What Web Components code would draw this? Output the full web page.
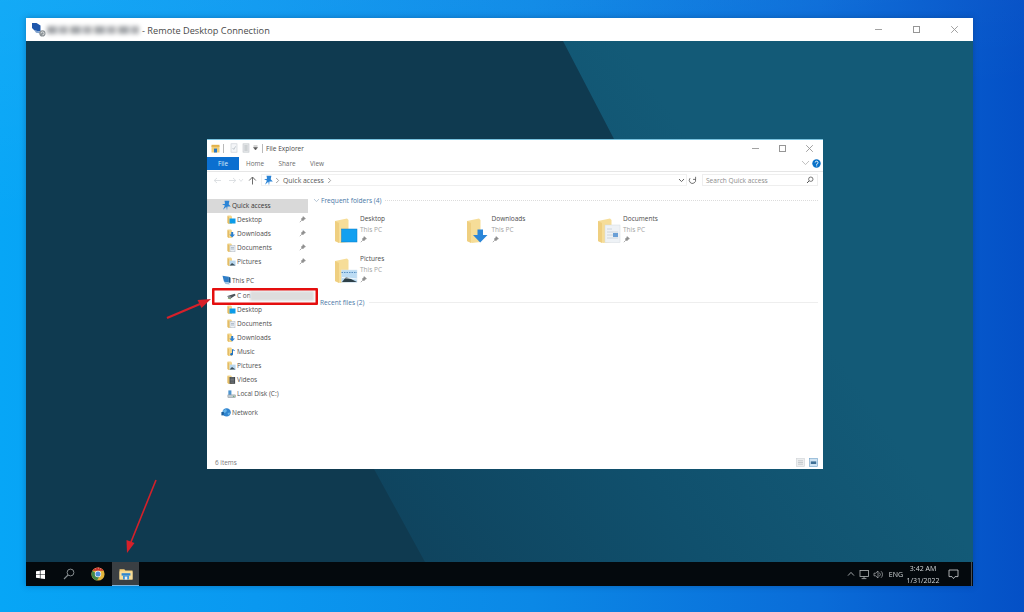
<!DOCTYPE html>
<html lang="en">
<head>
<meta charset="utf-8">
<title>Remote Desktop Connection</title>
<style>
  html, body { margin: 0; height: 100%; }
  body { font-family: "Open Sans", "Liberation Sans", sans-serif; overflow: hidden; }
</style>
</head>
<body>
<desktop-screen>
  <rdp-window>
    <explorer-window slot="window">
      <nav-item slot="nav" icon="star" level="0" selected>Quick access</nav-item>
      <nav-item slot="nav" icon="navDesktop" level="1" pinned>Desktop</nav-item>
      <nav-item slot="nav" icon="navDownloads" level="1" pinned>Downloads</nav-item>
      <nav-item slot="nav" icon="navDocuments" level="1" pinned>Documents</nav-item>
      <nav-item slot="nav" icon="navPictures" level="1" pinned>Pictures</nav-item>
      <nav-item slot="nav" icon="pc" level="0" group tall>This PC</nav-item>
      <nav-item slot="nav" icon="drive" level="1" marked>C on<span class="smudge"></span></nav-item>
      <nav-item slot="nav" icon="navDesktop" level="1">Desktop</nav-item>
      <nav-item slot="nav" icon="navDocuments" level="1">Documents</nav-item>
      <nav-item slot="nav" icon="navDownloads" level="1">Downloads</nav-item>
      <nav-item slot="nav" icon="navMusic" level="1">Music</nav-item>
      <nav-item slot="nav" icon="navPictures" level="1">Pictures</nav-item>
      <nav-item slot="nav" icon="navVideos" level="1">Videos</nav-item>
      <nav-item slot="nav" icon="disk" level="1">Local Disk (C:)</nav-item>
      <nav-item slot="nav" icon="network" level="0" group>Network</nav-item>

      <folder-tile slot="tiles" icon="bigDesktop">Desktop</folder-tile>
      <folder-tile slot="tiles" icon="bigDownloads">Downloads</folder-tile>
      <folder-tile slot="tiles" icon="bigDocuments">Documents</folder-tile>
      <folder-tile slot="tiles" icon="bigPictures">Pictures</folder-tile>
    </explorer-window>
    <task-bar slot="taskbar"></task-bar>
  </rdp-window>
  <red-arrows></red-arrows>
</desktop-screen>

<script>
"use strict";

const folderBack = `<path d="M1 3 L13 .5 L14.5 2 V24 L6 25 L1 23Z" fill="#f6dd98"/><path d="M1 3 L5 5 V25 L1 23Z" fill="#efcf80"/>`;
const navFolder = `<path d="M.5 .5 H4 L5 1.5 V9 H2 L.5 8Z" fill="#f4d68a"/><path d="M.5 1 L2 2 V9 L.5 8Z" fill="#e4bc66"/>`;

const ICONS = {
  star: [11, 11, `<path d="M3.5 .8 L8.4 .8 L7.7 4.2 L9.8 6.4 L6.5 6.5 L6 10.6 L5.3 6.8 L2 9.8 L3.9 5.6 L1 4.3 L4.1 3.7Z" fill="#2b84d6"/>`],
  pin: [7, 7, `<path d="M4.2 .6 L6.4 2.8 L5.3 3.1 L4 4.8 L2.2 3 L3.9 1.7Z M2.9 4.1 L.8 6.2" fill="#8d8d8d" stroke="#8d8d8d" stroke-width=".7"/>`],
  navDesktop: [9, 9, `${navFolder}<rect x="2.5" y="3.5" width="6" height="5" fill="#0c9be8"/>`],
  navDownloads: [9, 9, `${navFolder}<path d="M4.2 3 H6.2 V5.4 H8 L5.2 8.6 L2.4 5.4 H4.2Z" fill="#2a7fd0"/>`],
  navDocuments: [9, 9, `${navFolder}<rect x="3" y="2.5" width="5" height="6.3" fill="#edf1f5" stroke="#a9b4c0" stroke-width=".5"/><path d="M4 4.4 H7 M4 6 H7" stroke="#7c93ad" stroke-width=".6"/>`],
  navPictures: [9, 9, `${navFolder}<rect x="2.6" y="3.6" width="6" height="5" fill="#b9d7ee"/><path d="M2.6 8.6 L5 6 L8.6 8.6Z" fill="#3a4f5c"/>`],
  navMusic: [9, 9, `${navFolder}<path d="M5.5 2.5 V7 M5.5 2.5 L7.6 3.6" stroke="#1d6fc0" stroke-width="1" fill="none"/><circle cx="4.6" cy="7.2" r="1.3" fill="#1d6fc0"/>`],
  navVideos: [9, 9, `${navFolder}<rect x="2.5" y="2" width="5.6" height="6.8" fill="#3f4448"/><path d="M3.4 3 H7.2 M3.4 4.4 H7.2 M3.4 5.8 H7.2 M3.4 7.2 H7.2" stroke="#aab0b4" stroke-width=".5"/>`],
  pc: [11, 11, `<path d="M1.5 .8 L7.8 1.8 V7.6 L3 6.8Z" fill="#2f7fc8"/><path d="M3 6.8 L7.8 7.6 L8.8 9.6 L4.5 9Z" fill="#9dc2e0"/><path d="M7.8 1.8 L9.5 2.8 V8 L7.8 7.6Z" fill="#17578f"/>`],
  drive: [10, 8, `<path d="M.5 4 L8.6 1.6 L9.6 3.2 L4 6.8 L1.8 6.4Z" fill="#4a5257"/><path d="M.5 4 L5 4.6 L4 6.8 L1.8 6.4Z" fill="#8a9196"/><path d="M1 6.6 L4.5 7.2" stroke="#6fa04a" stroke-width=".7"/>`],
  disk: [10, 10, `<rect x="1.5" y="1" width="3.4" height="5" fill="#4d94cf"/><rect x="1" y="6" width="8.4" height="3" fill="#c4ccd2" stroke="#7c868d" stroke-width=".5"/><rect x="6.6" y="7.1" width="1.6" height=".8" fill="#45a045"/>`],
  network: [11, 11, `<circle cx="5.6" cy="5.4" r="4.2" fill="#2f84cf"/><path d="M2 3.5 L5 2 L6 4 L4 6 L2.5 5.5Z M6.5 6 L9.3 5.6 L7.8 8.8Z" fill="#69b4e8"/><rect x=".4" y="5" width="2.4" height="3.4" fill="#1c5f9c"/>`],
  bigDesktop: [24, 25, `${folderBack}<rect x="7.5" y="11" width="15.5" height="13" fill="#12a0f0" stroke="#0a7cc8" stroke-width=".5"/>`],
  bigDownloads: [24, 25, `${folderBack}<path d="M11.5 11.5 H17 V17 H21.5 L14.2 24.5 L7 17 H11.5Z" fill="#2b86d8"/>`],
  bigDocuments: [24, 25, `${folderBack}<rect x="8" y="7" width="15" height="17.5" fill="#eef2f6" stroke="#d4dae0" stroke-width=".5"/><path d="M10 11 H15 M10 14 H21 M10 17 H21 M10 20 H21" stroke="#c4ced8" stroke-width=".8"/><rect x="16" y="15" width="5" height="4" fill="#6a9fd6"/>`],
  bigPictures: [24, 25, `${folderBack}<rect x="7.5" y="12" width="15.5" height="12.5" fill="#bcdcf4" stroke="#d9e6f0" stroke-width=".5"/><path d="M7.5 14.5 H23" stroke="#5a8fc0" stroke-width="1.2" stroke-dasharray="1.5 1"/><path d="M8 24 L12 19 L17 21 L23 24Z" fill="#2e4048"/><path d="M8 19.5 L23 21" stroke="#ffffff" stroke-width=".8"/>`],
  rdp: [14, 15, `<path d="M0 1 L4.5 1 L8.5 3.5 V9.5 L2.5 8.5 L0 6Z" fill="#1f57ab"/><path d="M2.5 8.5 L8.5 9.5 L9 11.5 L4 10.8Z" fill="#7ea0cc"/><circle cx="10.4" cy="11.4" r="3.1" fill="#8b9296"/><path d="M9 11.4 A1.5 1.5 0 1 1 10.4 12.9" stroke="#fff" stroke-width=".7" fill="none"/>`],
  quick: [9, 9, `<rect x=".5" y="2" width="8" height="6.5" fill="#f2cf78"/><rect x=".5" y=".8" width="8" height="2" fill="#e2b24c"/><rect x="3" y="4.6" width="3" height="3.9" fill="#2a79c4"/>`],
  check: [8, 10, `<rect x="1" y=".8" width="6" height="8.4" fill="#f4f6f8" stroke="#c6ccd1" stroke-width=".6"/><path d="M2.6 5 L3.8 6.4 L5.6 3.4" stroke="#aab3ba" stroke-width=".7" fill="none"/>`],
  page: [8, 10, `<rect x="1" y=".8" width="6" height="8.4" fill="#e4e6e8" stroke="#c2c7cb" stroke-width=".6"/><path d="M2.4 3 H5.6 M2.4 5 H5.6 M2.4 7 H5.6" stroke="#a3a9ae" stroke-width=".7"/>`],
  caret: [7, 7, `<path d="M1.5 2.5 H5.5 L3.5 5Z M1.5 1 H5.5" fill="#555" stroke="#555" stroke-width=".5"/>`],
  min: [9, 9, `<path d="M1 4.5 H8" stroke="#a2a2a2"/>`],
  max: [9, 9, `<rect x="1.5" y="1.5" width="6" height="6" fill="none" stroke="#969696"/>`],
  close: [9, 9, `<path d="M1.2 1.2 L7.8 7.8 M7.8 1.2 L1.2 7.8" stroke="#969696" stroke-width=".9"/>`],
  chevDown: [9, 6, `<path d="M1 1 L4.5 4.6 L8 1" fill="none" stroke="#b0b0b0" stroke-width=".8"/>`],
  help: [9, 9, `<circle cx="4.5" cy="4.5" r="4.2" fill="#0a72c9"/><path d="M3.2 3.5 A1.4 1.4 0 1 1 4.7 5 V5.8 M4.7 6.4 V7.4" stroke="#fff" stroke-width=".9" fill="none"/>`],
  back: [9, 7, `<path d="M8 3.5 H1.5 M4 1 L1.2 3.5 L4 6" fill="none" stroke="#d4d8dc" stroke-width=".8"/>`],
  forward: [9, 7, `<path d="M1 3.5 H7.5 M5 1 L7.8 3.5 L5 6" fill="none" stroke="#d4d8dc" stroke-width=".8"/>`],
  up: [9, 9, `<path d="M4.5 8.5 V1.2 M1.2 4.5 L4.5 1 L7.8 4.5" fill="none" stroke="#5c5c5c" stroke-width=".9"/>`],
  crumb: [5, 7, `<path d="M1.2 1 L3.6 3.5 L1.2 6" fill="none" stroke="#777" stroke-width=".7"/>`],
  crumbDown: [7, 5, `<path d="M1 1 L3.5 3.6 L6 1" fill="none" stroke="#666" stroke-width="1"/>`],
  chevSmall: [6, 5, `<path d="M1 1 L3 3.4 L5 1" fill="none" stroke="#d4d8dc" stroke-width=".7"/>`],
  refresh: [9, 9, `<path d="M2 2.2 A3.2 3.2 0 1 0 7.4 3 M7.6 .8 V3.4 H5" fill="none" stroke="#555" stroke-width=".8"/>`],
  search: [8, 8, `<circle cx="4.8" cy="3.2" r="2.2" fill="none" stroke="#555" stroke-width=".8"/><path d="M3.2 4.8 L1 7" stroke="#555" stroke-width="1"/>`],
  sectionDown: [7, 5, `<path d="M1 1 L3.5 3.6 L6 1" fill="none" stroke="#9ab0c4" stroke-width=".7"/>`],
  viewDetails: [9, 9, `<rect x=".5" y=".5" width="8" height="8" fill="#eceeef" stroke="#ced2d5" stroke-width=".6"/><path d="M2 2.8 H7 M2 4.5 H7 M2 6.2 H7" stroke="#b8bdc1" stroke-width=".7"/>`],
  viewTiles: [9, 9, `<rect x=".5" y=".5" width="8" height="8" fill="#cfe3f2" stroke="#6fa0c8" stroke-width=".6"/><rect x="1.8" y="3.4" width="5.4" height="2.6" fill="#3e6f96"/>`],
  winLogo: [9, 9, `<path d="M0 1.3 L3.9 .7 V4.2 H0Z M4.5 .6 L9 0 V4.2 H4.5Z M0 4.8 H3.9 V8.3 L0 7.7Z M4.5 4.8 H9 V9 L4.5 8.4Z" fill="#fff"/>`],
  taskSearch: [12, 12, `<circle cx="7.5" cy="4.5" r="3.4" fill="none" stroke="#868c8f" stroke-width="1"/><path d="M5 7 L1 11" stroke="#868c8f" stroke-width="1.1"/>`],
  chrome: [14, 14, `<circle cx="7" cy="7" r="6.6" fill="#e2b53c"/><path d="M1.3 3.8 A6.6 6.6 0 0 1 12.7 3.8 H7 Z" fill="#c9332c"/><path d="M1.3 3.8 A6.6 6.6 0 0 0 6 13.5 L8.6 9Z" fill="#43884a"/><circle cx="7" cy="7" r="3.2" fill="#f2f4f6"/><circle cx="7" cy="7" r="2.5" fill="#4d8fdc"/><path d="M4.5 1.8 h.6 M7 1.2 h.6 M9.4 1.9 h.6" stroke="#fff" stroke-width=".7"/>`],
  taskFolder: [14, 12, `<path d="M.5 1.2 H5.3 L6.4 2.4 H13.5 V11.5 H.5Z" fill="#f2cd74"/><rect x=".5" y="3.4" width="13" height="8.1" fill="#f8de9a"/><rect x="2.6" y="5.2" width="8.8" height="2.4" fill="#2f86cf"/><rect x="4" y="7.6" width="6" height="3.9" fill="#3e94d8"/><rect x="5.8" y="8.6" width="2.4" height="2.9" fill="#e8eef2"/>`],
  trayUp: [8, 6, `<path d="M1 4.6 L4 1.4 L7 4.6" fill="none" stroke="#c4c8ca" stroke-width=".8"/>`],
  trayNet: [11, 11, `<rect x="1" y="1.5" width="8.4" height="6" fill="none" stroke="#b4b8ba" stroke-width=".8"/><path d="M5 7.5 V9.4 M2.6 9.6 H7.4" stroke="#b4b8ba" stroke-width=".8"/>`],
  trayVol: [11, 9, `<path d="M1 3.2 H2.6 L5 1 V8 L2.6 5.8 H1Z" fill="none" stroke="#b4b8ba" stroke-width=".7"/><path d="M6.4 2.6 A2.6 2.6 0 0 1 6.4 6.4 M8 1.2 A4.4 4.4 0 0 1 8 7.8" fill="none" stroke="#b4b8ba" stroke-width=".7"/>`],
  trayNote: [11, 11, `<path d="M1 1 H10 V7.6 H7 L5.5 9.6 L4 7.6 H1Z" fill="none" stroke="#d4d7d9" stroke-width=".8"/>`]
};

class AppIcon extends HTMLElement {
  constructor() {
    super();
    this.attachShadow({ mode: "open" });
  }
  connectedCallback() {
    const [w, h, body] = ICONS[this.getAttribute("name")];
    this.shadowRoot.innerHTML = `
      <style>
        :host { display: inline-flex; flex: none; }
        svg { display: block; }
      </style>
      <svg width="${w}" height="${h}" viewBox="0 0 ${w} ${h}">${body}</svg>`;
  }
}
customElements.define("app-icon", AppIcon);

class DesktopScreen extends HTMLElement {
  constructor() {
    super();
    this.attachShadow({ mode: "open" });
    this.shadowRoot.innerHTML = `
      <style>
        :host {
          display: block;
          position: relative;
          width: 1024px;
          height: 612px;
          overflow: hidden;
          background: linear-gradient(90deg, #07a6f6 0%, #0a98f0 25%, #0b88e6 52%, #0a6cd8 80%, #0450c6 100%);
        }
        .sheen {
          position: absolute;
          inset: 0;
          background: linear-gradient(172deg, rgba(255,255,255,.05) 0%, rgba(255,255,255,0) 30%);
        }
      </style>
      <div class="sheen"></div>
      <slot></slot>`;
  }
}
customElements.define("desktop-screen", DesktopScreen);

class RdpWindow extends HTMLElement {
  constructor() {
    super();
    this.attachShadow({ mode: "open" });
    this.shadowRoot.innerHTML = `
      <style>
        :host {
          display: flex;
          flex-direction: column;
          position: absolute;
          left: 26px;
          top: 18px;
          width: 947px;
          height: 568px;
          box-shadow: 0 0 6px rgba(0,40,90,.35);
          filter: blur(.35px);
        }
        .title {
          flex: none;
          height: 23px;
          background: #fff;
          display: flex;
          align-items: center;
          padding-left: 6px;
          font-size: 9.2px;
          color: #4a4a4a;
        }
        .title > span { padding-top: 1px; }
        .host-name {
          width: 92px;
          height: 8px;
          margin: 0 3px 0 1px;
          background: repeating-linear-gradient(90deg, #a3a6aa 0 9px, #cfd1d3 9px 13px, #aeb0b3 13px 20px, #dcdcdc 20px 24px);
          filter: blur(2px);
        }
        .controls { margin-left: auto; display: flex; }
        .controls span { width: 38px; height: 23px; display: flex; align-items: center; justify-content: center; }
        .wall {
          flex: 1;
          position: relative;
          background: #0f3a50;
          overflow: hidden;
        }
        .wall svg { position: absolute; inset: 0; }
        ::slotted(task-bar) { flex: none; }
      </style>
      <div class="title">
        <app-icon name="rdp"></app-icon>
        <div class="host-name"></div>
        <span>- Remote Desktop Connection</span>
        <div class="controls">
          <span><app-icon name="min"></app-icon></span>
          <span><app-icon name="max"></app-icon></span>
          <span><app-icon name="close"></app-icon></span>
        </div>
      </div>
      <div class="wall">
        <svg width="947" height="521" viewBox="0 0 947 521">
          <defs>
            <linearGradient id="r" gradientUnits="userSpaceOnUse" x1="350" y1="521" x2="760" y2="240">
              <stop offset="0" stop-color="#0f425c"/>
              <stop offset=".55" stop-color="#10506d"/>
              <stop offset="1" stop-color="#135a77"/>
            </linearGradient>
          </defs>
          <polygon points="537,0 947,0 947,521 399,521 348,428 588,98" fill="url(#r)"/>
        </svg>
        <slot name="window"></slot>
      </div>
      <slot name="taskbar"></slot>`;
  }
}
customElements.define("rdp-window", RdpWindow);

class ExplorerWindow extends HTMLElement {
  constructor() {
    super();
    this.attachShadow({ mode: "open" });
    this.shadowRoot.innerHTML = `
      <style>
        :host {
          display: flex;
          flex-direction: column;
          position: absolute;
          left: 181px;
          top: 98px;
          width: 616px;
          height: 330px;
          background: #fff;
          border-top: 1px solid #79c3e0;
          box-sizing: border-box;
          font-size: 6.6px;
          color: #4b4b4b;
        }
        .titlebar { flex: none; height: 16px; display: flex; align-items: center; padding-left: 4px; }
        .sep { width: 1px; height: 9px; background: #b9b9b9; }
        .wc { margin-left: auto; display: flex; }
        .wc span { width: 27px; height: 16px; display: flex; align-items: center; justify-content: center; }
        .tabs {
          flex: none;
          height: 14px;
          display: flex;
          align-items: center;
          border-bottom: 1px solid #e6e6e6;
          padding-bottom: 1px;
          font-size: 6.4px;
          color: #6b6b6b;
        }
        .tabs .tab { width: 32px; text-align: center; }
        .tabs .file {
          height: 13px;
          line-height: 13px;
          background: #0b6fd0;
          color: #dceefc;
        }
        .tabs .end { margin-left: auto; display: flex; align-items: center; gap: 2px; padding-right: 2px; }
        .address { flex: none; height: 16px; display: flex; align-items: center; padding-left: 6px; }
        .crumbs {
          margin-left: 4px;
          width: 426px;
          height: 12px;
          border: 1px solid #f0f0f0;
          display: flex;
          align-items: center;
          box-sizing: border-box;
          padding-left: 1px;
          color: #555;
          font-size: 6.9px;
        }
        .search {
          margin-left: 5px;
          width: 116px;
          height: 12px;
          box-sizing: border-box;
          border: 1px solid #eeeeee;
          display: flex;
          align-items: center;
          padding: 0 3px;
          color: #8c8c8c;
          justify-content: space-between;
          font-size: 6.6px;
        }
        .main { flex: 1; display: flex; min-height: 0; }
        .nav { flex: none; width: 101px; padding-top: 11px; display: flex; flex-direction: column; }
        .content { flex: 1; padding: 6px 5px 0 5px; }
        .section { height: 14px; display: flex; align-items: center; gap: 1px; color: #4a78a6; font-size: 6.6px; padding-bottom: 1px; box-sizing: border-box; }
        .section i { flex: 1; margin-left: 3px; border-top: 1px dotted #dcdcdc; }
        .section.solid { margin-top: 2px; }
        .section.solid i { border-top: 1px solid #eeeeee; }
        .tiles {
          display: grid;
          grid-template-columns: repeat(3, 131.5px);
          grid-auto-rows: 40px;
          padding: 6px 0 0 21px;
        }
        .status {
          flex: none;
          height: 14px;
          display: flex;
          align-items: center;
          padding: 0 5px 0 8px;
          color: #777;
          font-size: 6.4px;
        }
        .status .views { margin-left: auto; display: flex; gap: 4px; }
      </style>
      <div class="titlebar">
        <app-icon name="quick"></app-icon>
        <div class="sep" style="margin:0 6px 0 3px"></div>
        <app-icon name="check"></app-icon>
        <app-icon name="page" style="margin-left:4px"></app-icon>
        <app-icon name="caret" style="margin-left:2px"></app-icon>
        <div class="sep" style="margin:0 3px 0 3px"></div>
        <span>File Explorer</span>
        <div class="wc">
          <span><app-icon name="min"></app-icon></span>
          <span><app-icon name="max"></app-icon></span>
          <span><app-icon name="close"></app-icon></span>
        </div>
      </div>
      <div class="tabs">
        <div class="tab file">File</div>
        <div class="tab">Home</div>
        <div class="tab">Share</div>
        <div class="tab" style="width:28px">View</div>
        <div class="end"><app-icon name="chevDown"></app-icon><app-icon name="help"></app-icon></div>
      </div>
      <div class="address">
        <app-icon name="back"></app-icon>
        <app-icon name="forward" style="margin-left:6px"></app-icon>
        <app-icon name="chevSmall" style="margin-left:1px"></app-icon>
        <app-icon name="up" style="margin-left:4px"></app-icon>
        <div class="crumbs">
          <app-icon name="star"></app-icon>
          <app-icon name="crumb" style="margin:0 3px 0 1px"></app-icon>
          <span>Quick access</span>
          <app-icon name="crumb" style="margin-left:3px"></app-icon>
          <app-icon name="crumbDown" style="margin-left:auto;margin-right:1px"></app-icon>
        </div>
        <app-icon name="refresh" style="margin-left:1px"></app-icon>
        <div class="search"><span>Search Quick access</span><app-icon name="search"></app-icon></div>
      </div>
      <div class="main">
        <div class="nav"><slot name="nav"></slot></div>
        <div class="content">
          <div class="section"><app-icon name="sectionDown"></app-icon><span>Frequent folders (4)</span><i></i></div>
          <div class="tiles"><slot name="tiles"></slot></div>
          <div class="section solid"><span style="margin-left:7px">Recent files (2)</span><i></i></div>
        </div>
      </div>
      <div class="status">
        <span>6 items</span>
        <div class="views"><app-icon name="viewDetails"></app-icon><app-icon name="viewTiles"></app-icon></div>
      </div>`;
  }
}
customElements.define("explorer-window", ExplorerWindow);

class NavItem extends HTMLElement {
  constructor() {
    super();
    this.attachShadow({ mode: "open" });
  }
  connectedCallback() {
    const deep = this.getAttribute("level") === "1";
    const pin = this.hasAttribute("pinned") ? `<app-icon class="pin" name="pin"></app-icon>` : "";
    this.shadowRoot.innerHTML = `
      <style>
        :host {
          display: flex;
          align-items: center;
          position: relative;
          height: 14px;
          box-sizing: border-box;
          padding: 0 0 1px ${deep ? 20 : 14}px;
          color: #4f4f4f;
          font-size: 6.5px;
          white-space: nowrap;
        }
        :host([selected]) { background: #d9d9d9; color: #333; }
        :host([group]) { margin-top: 5px; }
        :host([tall]) { height: 15px; padding-bottom: 2px; }
        :host([marked])::after {
          content: "";
          position: absolute;
          left: 5px;
          top: -1px;
          width: 106px;
          height: 17px;
          box-sizing: border-box;
          border: 2px solid #e40e0e;
          box-shadow: inset 0 0 0 .5px #e40e0e;
          border-radius: 1px;
        }
        app-icon.lead { width: ${deep ? 9 : 11}px; margin-right: ${deep ? 1 : 0}px; }
        .pin { position: absolute; right: 2px; top: 3px; }
        ::slotted(.smudge) {
          display: inline-block;
          position: absolute;
          left: 43px;
          top: 2px;
          width: 64px;
          height: 10px;
          background: #dddddd;
          filter: blur(.8px);
        }
      </style>
      <app-icon class="lead" name="${this.getAttribute("icon")}"></app-icon>
      <slot></slot>
      ${pin}`;
  }
}
customElements.define("nav-item", NavItem);

class FolderTile extends HTMLElement {
  constructor() {
    super();
    this.attachShadow({ mode: "open" });
  }
  connectedCallback() {
    this.shadowRoot.innerHTML = `
      <style>
        :host { display: flex; gap: 2px; font-size: 6.5px; color: #4b4b4b; }
        .pic { padding-top: 3px; }
        .lines { display: flex; flex-direction: column; line-height: 11px; margin-top: -1px; }
        .sub { color: #a2a2a2; }
        app-icon { margin-top: 1px; }
      </style>
      <div class="pic"><app-icon name="${this.getAttribute("icon")}"></app-icon></div>
      <div class="lines">
        <slot></slot>
        <span class="sub">This PC</span>
        <app-icon name="pin"></app-icon>
      </div>`;
  }
}
customElements.define("folder-tile", FolderTile);

class TaskBar extends HTMLElement {
  constructor() {
    super();
    this.attachShadow({ mode: "open" });
    this.shadowRoot.innerHTML = `
      <style>
        :host {
          display: flex;
          align-items: stretch;
          height: 24px;
          background: #04090d;
          color: #d4d8da;
          font-size: 7px;
        }
        .btn { width: 29px; display: flex; align-items: center; justify-content: center; box-sizing: border-box; }
        .btn.active { width: 27px; background: #3a3f43; border-bottom: 1px solid #7fb4dc; }
        .tray { margin-left: auto; display: flex; align-items: center; }
        .clock { display: flex; flex-direction: column; align-items: center; line-height: 12px; width: 38px; margin-left: 1px; padding-top: 1px; }
        .edge { width: 1px; align-self: stretch; background: #4a5054; margin-left: 12px; margin-right: 1px; }
      </style>
      <div class="btn" style="width:28px"><app-icon name="winLogo"></app-icon></div>
      <div class="btn"><app-icon name="taskSearch"></app-icon></div>
      <div class="btn"><app-icon name="chrome"></app-icon></div>
      <div class="btn active"><app-icon name="taskFolder"></app-icon></div>
      <div class="tray">
        <app-icon name="trayUp"></app-icon>
        <app-icon name="trayNet" style="margin-left:4px"></app-icon>
        <app-icon name="trayVol" style="margin-left:3px"></app-icon>
        <span style="margin-left:5px">ENG</span>
        <div class="clock"><span>3:42 AM</span><span>1/31/2022</span></div>
        <app-icon name="trayNote" style="margin-left:6px"></app-icon>
        <div class="edge"></div>
      </div>`;
  }
}
customElements.define("task-bar", TaskBar);

class RedArrows extends HTMLElement {
  constructor() {
    super();
    this.attachShadow({ mode: "open" });
    this.shadowRoot.innerHTML = `
      <style>
        :host { position: absolute; inset: 0; pointer-events: none; display: block; }
        svg { display: block; filter: blur(.3px); }
      </style>
      <svg width="1024" height="612" viewBox="0 0 1024 612">
        <path d="M167 318 L200 304" stroke="#d5202a" stroke-width="2.2"/>
        <path d="M211 299 L197.5 300 L201.5 308Z" fill="#d5202a"/>
        <path d="M156 480 L131 542" stroke="#d5202a" stroke-width="1.6"/>
        <path d="M127 553 L126.5 540 L134.5 543Z" fill="#d5202a"/>
      </svg>`;
  }
}
customElements.define("red-arrows", RedArrows);
</script>
</body>
</html>
